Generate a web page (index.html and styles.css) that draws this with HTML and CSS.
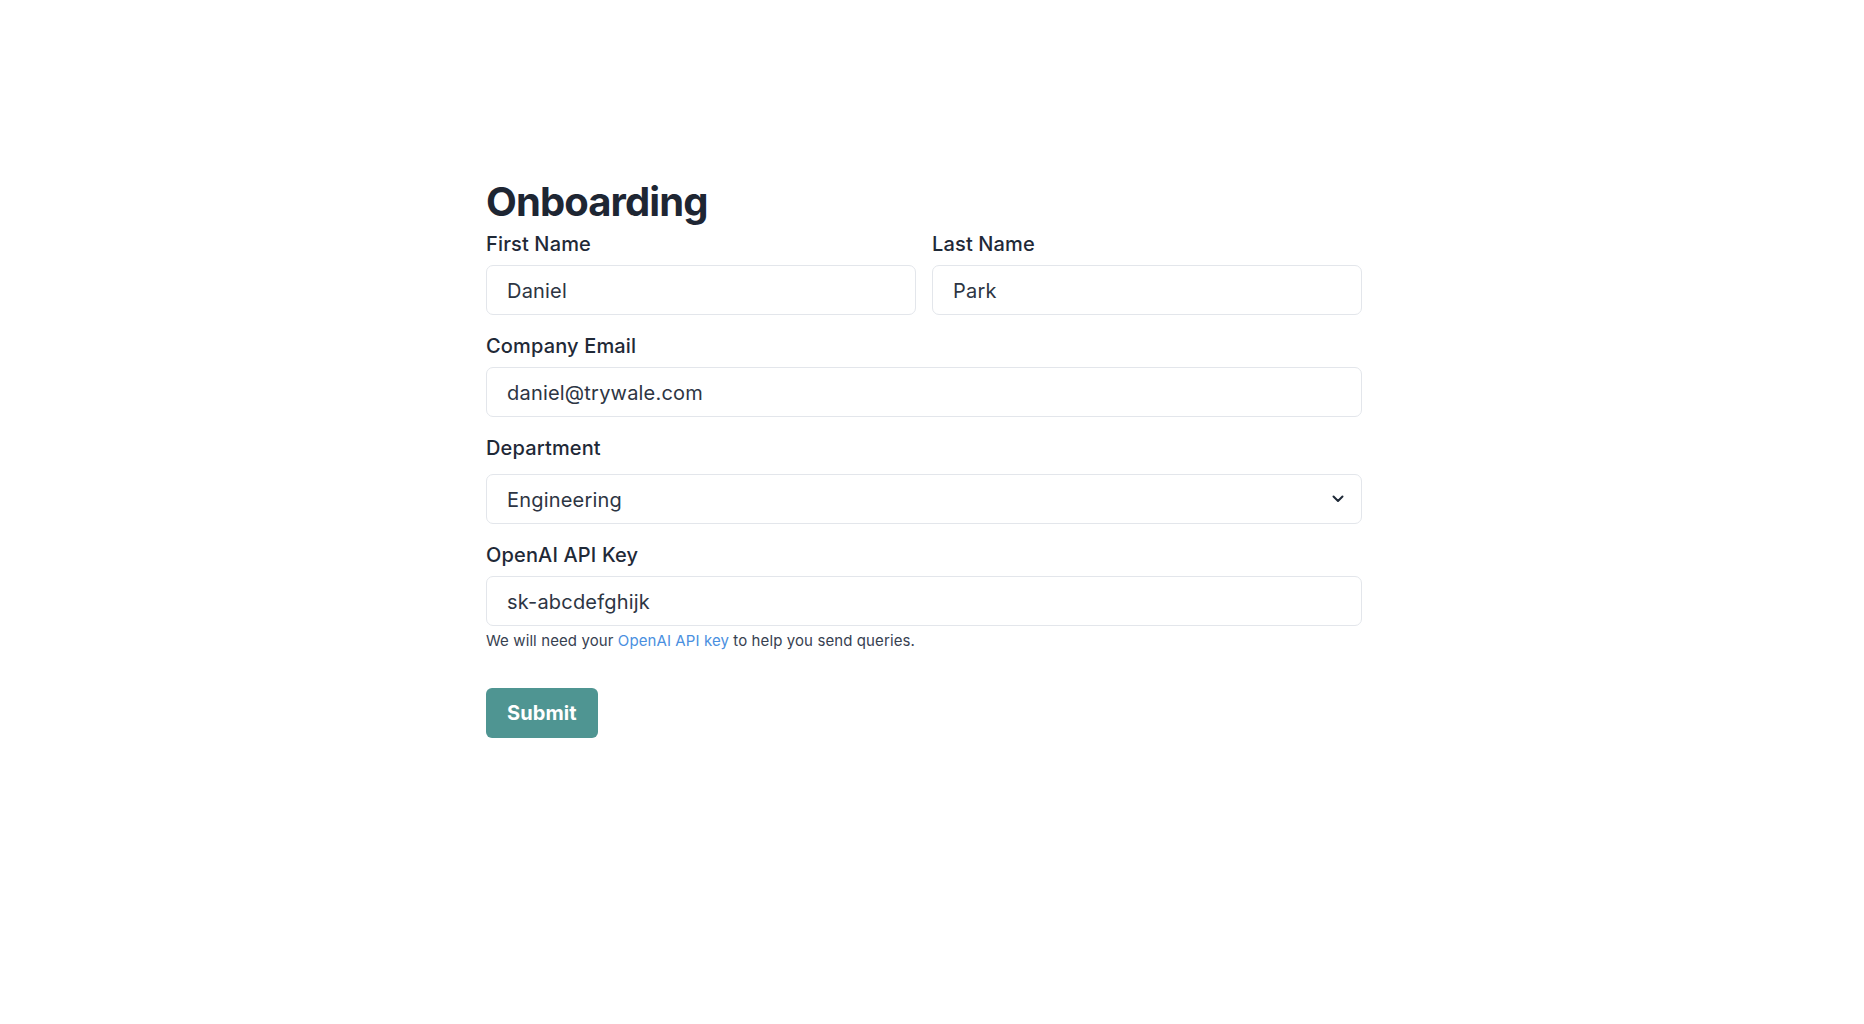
FILE: index.html
```html
<!DOCTYPE html>
<html lang="en">
<head>
<meta charset="utf-8">
<title>Onboarding</title>
<link rel="stylesheet" href="styles.css">
</head>
<body>
<main class="page">
  <form class="form">
    <h1 class="title">Onboarding</h1>
    <div class="row">
      <div class="field">
        <label class="label" for="first">First Name</label>
        <input class="input" id="first" type="text" value="Daniel">
      </div>
      <div class="field">
        <label class="label" for="last">Last Name</label>
        <input class="input" id="last" type="text" value="Park">
      </div>
    </div>
    <div class="field">
      <label class="label" for="email">Company Email</label>
      <input class="input" id="email" type="email" value="daniel@trywale.com">
    </div>
    <div class="field">
      <label class="label" for="dept">Department</label>
      <div class="select-wrap">
        <select class="input select" id="dept">
          <option>Engineering</option>
        </select>
        <svg class="chevron" width="12" height="8" viewBox="0 0 12 8" aria-hidden="true">
          <path d="M1.5 1.5 L6 6 L10.5 1.5" fill="none" stroke="#1f2937" stroke-width="2" stroke-linecap="round" stroke-linejoin="round"/>
        </svg>
      </div>
    </div>
    <div class="field">
      <label class="label" for="key">OpenAI API Key</label>
      <input class="input" id="key" type="text" value="sk-abcdefghijk">
      <p class="help">We will need your <a class="link" href="#">OpenAI API key</a> to help you send queries.</p>
    </div>
    <div class="actions">
      <button class="submit" type="button">Submit</button>
    </div>
  </form>
</main>
</body>
</html>
```

FILE: styles.css
```css
* { box-sizing: border-box; }

html, body {
  margin: 0;
  padding: 0;
  background: #ffffff;
}

body {
  font-family: Inter, "Noto Sans", "Liberation Sans", sans-serif;
  color: #1f2937;
  padding-right: 16px;
}

.page {
  width: 876px;
  margin: 0 auto;
  padding-top: 178px;
}

.form {
  display: flex;
  flex-direction: column;
}

.title {
  margin: 0 0 4px 0;
  font-size: 40px;
  line-height: 48px;
  font-weight: 700;
  color: #1e2633;
  letter-spacing: -0.9px;
}

.row {
  display: grid;
  grid-template-columns: 1fr 1fr;
  gap: 16px;
  margin-bottom: 17px;
}

.row .field { margin-bottom: 0; }

.field {
  display: flex;
  flex-direction: column;
  margin-bottom: 17px;
}

.label {
  font-size: 20px;
  line-height: 28px;
  font-weight: 500;
  color: #1f2937;
  margin-bottom: 7px;
  letter-spacing: 0.15px;
}

.input {
  display: block;
  width: 100%;
  height: 50px;
  padding: 1px 20px 0 20px;
  border: 1px solid #e3e6eb;
  border-radius: 7px;
  background: #ffffff;
  font-family: inherit;
  font-size: 20px;
  letter-spacing: 0.2px;
  color: #2d3543;
  outline: none;
}

.select-wrap {
  position: relative;
  margin-top: 5px;
}

.select {
  appearance: none;
  -webkit-appearance: none;
  cursor: pointer;
}

.chevron {
  position: absolute;
  right: 18px;
  top: 21px;
  pointer-events: none;
}

.help {
  margin: 5px 0 0 0;
  font-size: 15px;
  line-height: 20px;
  letter-spacing: 0.1px;
  color: #374151;
}

.link {
  color: #4a8fe0;
  text-decoration: none;
}

.actions {
  margin-top: 20px;
}

.submit {
  height: 50px;
  padding: 0 21px;
  border: none;
  border-radius: 6px;
  background: #4f9592;
  color: #ffffff;
  font-family: inherit;
  font-size: 20px;
  font-weight: 700;
  letter-spacing: 0.1px;
  cursor: pointer;
}
```
